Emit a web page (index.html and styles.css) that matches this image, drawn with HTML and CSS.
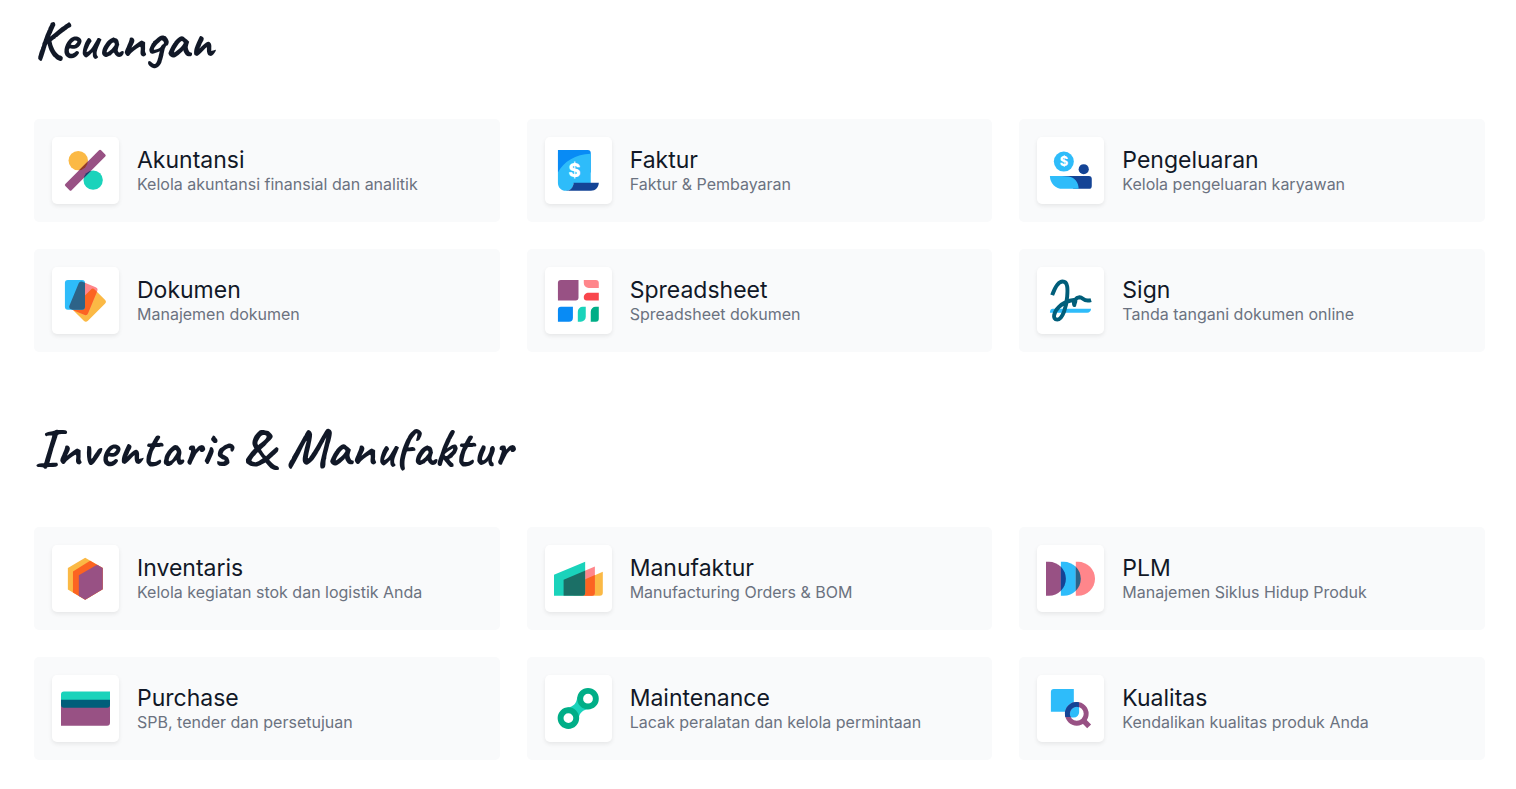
FILE: index.html
```html
<!DOCTYPE html>
<html lang="id">
  <head>
    <meta charset="utf-8">
    <title>Aplikasi</title>
    <link rel="stylesheet" href="styles.css">
  </head>
  <body>
    <main class="apps">

      <section class="category">
        <h2>Keuangan</h2>
        <div class="grid">
          <a class="app" href="#">
            <span class="icon">
              <svg viewBox="0 0 50 50" aria-hidden="true">
                <clipPath id="bar"><rect x="-1" y="20.3" width="51.6" height="9" rx="1.5" transform="rotate(-45 24.8 24.8)"/></clipPath>
                <circle cx="17.6" cy="14.9" r="9.9" fill="#fbb945"/>
                <circle cx="32.8" cy="34.8" r="9.9" fill="#1ad3bb"/>
                <rect x="-1" y="20.3" width="51.6" height="9" rx="1.5" transform="rotate(-45 24.8 24.8)" fill="#985184"/>
                <g clip-path="url(#bar)">
                  <circle cx="17.6" cy="14.9" r="9.9" fill="#953b24"/>
                  <circle cx="32.8" cy="34.8" r="9.9" fill="#17416f"/>
                </g>
              </svg>
            </span>
            <span class="text"><strong>Akuntansi</strong><small>Kelola akuntansi finansial dan analitik</small></span>
          </a>
          <a class="app" href="#">
            <span class="icon">
              <svg viewBox="0 0 50 50" aria-hidden="true">
                <path d="M4 4h30.500a3 3 0 0 1 3 3v20H4z" fill="#088bf5"/>
                <path d="M4 27C10 16 22 8.500 37.500 8v30H20c0 4.500-3.500 7.700-8 7.700s-8-3.500-8-8z" fill="#2ebcfa"/>
                <path d="M20 37.500h25.700c0 4.500-3.500 8.200-8 8.200H12c4.500 0 8-3.700 8-8.200z" fill="#144496"/>
                <text class="dollar" x="20.700" y="31.700" font-size="19">$</text>
              </svg>
            </span>
            <span class="text"><strong>Faktur</strong><small>Faktur &amp; Pembayaran</small></span>
          </a>
          <a class="app" href="#">
            <span class="icon">
              <svg viewBox="0 0 50 50" aria-hidden="true">
                <circle cx="18.200" cy="15.900" r="10.200" fill="#2ebcfa"/>
                <circle cx="38.500" cy="23.700" r="5.200" fill="#144496"/>
                <path d="M16 30.500h27.700a3 3 0 0 1 3 3v7.200a3 3 0 0 1-3 3H28z" fill="#144496"/>
                <path d="M4 30.500h12l7 .6c6 .8 10.300 6 10.300 12.600H17C9.800 43.700 4 38 4 30.500z" fill="#2ebcfa"/>
                <text class="dollar" x="18.200" y="20.600" font-size="13">$</text>
              </svg>
            </span>
            <span class="text"><strong>Pengeluaran</strong><small>Kelola pengeluaran karyawan</small></span>
          </a>
          <a class="app" href="#">
            <span class="icon">
              <svg viewBox="0 0 50 50" aria-hidden="true">
                <clipPath id="page-back"><rect x="18.600" y="14.600" width="20.500" height="30.500" rx="3" transform="rotate(45 28.900 29.900)"/></clipPath>
                <clipPath id="page-front"><rect x="4" y="4" width="20.500" height="30.500" rx="3"/></clipPath>
                <rect x="18.600" y="14.600" width="20.500" height="30.500" rx="3" transform="rotate(45 28.900 29.900)" fill="#fbb945"/>
                <rect x="12.600" y="7.500" width="20.500" height="30.500" rx="3" transform="rotate(22.500 22.900 22.700)" fill="#ff868b"/>
                <g clip-path="url(#page-back)">
                  <rect x="12.600" y="7.500" width="20.500" height="30.500" rx="3" transform="rotate(22.500 22.900 22.700)" fill="#fc6421"/>
                </g>
                <rect x="4" y="4" width="20.500" height="30.500" rx="3" fill="#2ebcfa"/>
                <g clip-path="url(#page-front)">
                  <rect x="12.600" y="7.500" width="20.500" height="30.500" rx="3" transform="rotate(22.500 22.900 22.700)" fill="#2d6388"/>
                </g>
              </svg>
            </span>
            <span class="text"><strong>Dokumen</strong><small>Manajemen dokumen</small></span>
          </a>
          <a class="app" href="#">
            <span class="icon">
              <svg viewBox="0 0 50 50" aria-hidden="true">
                <path d="M7 4h18v18a3 3 0 0 1-3 3H4V7a3 3 0 0 1 3-3z" fill="#985184"/>
                <path d="M30.400 4h12.300a3 3 0 0 1 3 3v5.200H35.400a5 5 0 0 1-5-5z" fill="#ff868b"/>
                <path d="M35.400 17.200h10.300V25H33.400a3 3 0 0 1-3-3c0-2.800 2.200-4.800 5-4.800z" fill="#f9464c"/>
                <path d="M7 31.400h12.300v11.200a4 4 0 0 1-4 4H4V34.400a3 3 0 0 1 3-3z" fill="#088bf5"/>
                <path d="M29.300 31.400h3.100v10.200a5 5 0 0 1-5 5h-3.100V36.400a5 5 0 0 1 5-5z" fill="#1ad3bb"/>
                <path d="M42.500 31.400h3.200v12.200a3 3 0 0 1-3 3h-5.200V36.400a5 5 0 0 1 5-5z" fill="#00ae87"/>
              </svg>
            </span>
            <span class="text"><strong>Spreadsheet</strong><small>Spreadsheet dokumen</small></span>
          </a>
          <a class="app" href="#">
            <span class="icon">
              <svg viewBox="0 0 50 50" aria-hidden="true">
                <path d="M7 33.500h39c0 2.300-1.700 4-4 4H4c0-2.300 1-4 3-4z" fill="#2ebcfa"/>
                <path d="M6.300 19.600C9 12 12.500 5.600 17 5.600c5.500 0 5.200 8 4.600 15.400C20.900 31 17 44.500 11.500 44.500c-5.500 0-3.500-8 1.500-12.800 4.500-4.300 10.500-6.800 15.500-7.200 3 0 .5 3 .4 5.200-1.500-4 1.600-7.700 5.300-8 4-.2 3.800 5.300 11.800 2.800" fill="none" stroke="#005e7a" stroke-width="4" stroke-linejoin="round"/>
              </svg>
            </span>
            <span class="text"><strong>Sign</strong><small>Tanda tangani dokumen online</small></span>
          </a>
        </div>
      </section>

      <section class="category">
        <h2>Inventaris &amp; Manufaktur</h2>
        <div class="grid">
          <a class="app" href="#">
            <span class="icon">
              <svg viewBox="0 0 50 50" aria-hidden="true">
                <path d="M24.700 3.900l17.900 10.400V36L24.700 46.600 7 36.300v-22z" fill="#fbb945"/>
                <path d="M29.700 6.900l12.900 7.400V36L24.700 46.600l-12.500-7.300V17.800z" fill="#fc6421"/>
                <path d="M36.800 10.900l5.800 3.400V36L24.700 46.600l-6.500-3.800V21.800z" fill="#985184"/>
              </svg>
            </span>
            <span class="text"><strong>Inventaris</strong><small>Kelola kegiatan stok dan logistik Anda</small></span>
          </a>
          <a class="app" href="#">
            <span class="icon">
              <svg viewBox="0 0 50 50" aria-hidden="true">
                <clipPath id="hall"><path d="M0 21.300L31.800 7.800v31.800a3 3 0 0 1-3 3H0z"/></clipPath>
                <path d="M20 31l29.800-13v21.600a3 3 0 0 1-3 3H20z" fill="#fbb945"/>
                <path d="M9.800 26.300l31.900-13.500v26.800a3 3 0 0 1-3 3H9.800z" fill="#ff868b"/>
                <path d="M20 31l21.700-9.500v18.100a3 3 0 0 1-3 3H20z" fill="#fc6421"/>
                <path d="M0 21.300L31.800 7.800v31.800a3 3 0 0 1-3 3H0z" fill="#1ad3bb"/>
                <path d="M9.800 26.300l31.900-13.500v29.800H9.800z" fill="#1b6f66" clip-path="url(#hall)"/>
              </svg>
            </span>
            <span class="text"><strong>Manufaktur</strong><small>Manufacturing Orders &amp; BOM</small></span>
          </a>
          <a class="app" href="#">
            <span class="icon">
              <svg viewBox="0 0 50 50" aria-hidden="true">
                <clipPath id="d-one"><path d="M0 8h3a17.300 17.300 0 0 1 0 34.600H0z"/></clipPath>
                <clipPath id="d-two"><path d="M15.200 8h3a17.300 17.300 0 0 1 0 34.600h-3z"/></clipPath>
                <path d="M0 8h3a17.300 17.300 0 0 1 0 34.600H0z" fill="#985184"/>
                <path d="M15.200 8h3a17.300 17.300 0 0 1 0 34.600h-3z" fill="#2ebcfa"/>
                <path d="M30.400 8h2.300a17.300 17.300 0 0 1 0 34.600h-2.300z" fill="#ff868b"/>
                <path d="M15.200 8h6v34.600h-6z" fill="#144496" clip-path="url(#d-one)"/>
                <path d="M30.400 8h6v34.600h-6z" fill="#2d6388" clip-path="url(#d-two)"/>
              </svg>
            </span>
            <span class="text"><strong>PLM</strong><small>Manajemen Siklus Hidup Produk</small></span>
          </a>
          <a class="app" href="#">
            <span class="icon">
              <svg viewBox="0 0 50 50" aria-hidden="true">
                <path d="M0 16h50v23.500a3 3 0 0 1-3 3H0z" fill="#985184"/>
                <path d="M3 7.700h47V17H0v-6.300a3 3 0 0 1 3-3z" fill="#1ad3bb"/>
                <path d="M0 16h50v5.200a3 3 0 0 1-3 3H3a3 3 0 0 1-3-3z" fill="#005e7a"/>
              </svg>
            </span>
            <span class="text"><strong>Purchase</strong><small>SPB, tender dan persetujuan</small></span>
          </a>
          <a class="app" href="#">
            <span class="icon">
              <svg viewBox="0 0 50 50" aria-hidden="true">
                <path d="M23.700 13.500c-.5 6-4 10-10 10.500l-2 12 13.500-.5c.5-6 4.500-9.500 10.500-10l2-11.500z" fill="#1ad3bb"/>
                <circle cx="34.700" cy="15" r="8" fill="#fff" stroke="#00ae87" stroke-width="6"/>
                <circle cx="14.700" cy="34.800" r="8" fill="#fff" stroke="#00ae87" stroke-width="6"/>
              </svg>
            </span>
            <span class="text"><strong>Maintenance</strong><small>Lacak peralatan dan kelola permintaan</small></span>
          </a>
          <a class="app" href="#">
            <span class="icon">
              <svg viewBox="0 0 50 50" aria-hidden="true">
                <clipPath id="lens"><path d="M19 18h14.600v15.600H19z"/></clipPath>
                <path d="M8 5h20.400v23.400H5V8a3 3 0 0 1 3-3z" fill="#2ebcfa"/>
                <circle cx="31.400" cy="30.400" r="9.600" fill="#fff"/>
                <path d="M24 23h9.800v5.800a5.500 5.500 0 0 1-5.500 5.500H24z" fill="#2ebcfa"/>
                <path d="M37.500 36.500l6.500 6.700" stroke="#985184" stroke-width="5.500"/>
                <circle cx="31.400" cy="30.400" r="9.600" fill="none" stroke="#985184" stroke-width="5"/>
                <circle cx="31.400" cy="30.400" r="9.600" fill="none" stroke="#144496" stroke-width="5" clip-path="url(#lens)"/>
              </svg>
            </span>
            <span class="text"><strong>Kualitas</strong><small>Kendalikan kualitas produk Anda</small></span>
          </a>
        </div>
      </section>

    </main>
  </body>
</html>
```
FILE: styles.css
```css
*,
*:before,
*:after {
  box-sizing: border-box;
}

body {
  margin: 0;
  background: #fff;
  color: #111827;
  font-family: Inter, "Liberation Sans", sans-serif;
}

.apps {
  padding: 8px 31px 28px 34px;
}

.category + .category {
  margin-top: 64px;
}

h2 {
  margin: 0 0 46px;
  font-family: Caveat, cursive;
  font-size: 54px;
  font-weight: 700;
  line-height: 65px;
}

.grid {
  display: grid;
  grid-template-columns: repeat(3, 1fr);
  gap: 27px;
}

.app {
  display: flex;
  align-items: center;
  gap: 18px;
  padding: 18px;
  border-radius: 5px;
  background: #f9fafb;
  color: inherit;
  text-decoration: none;
}

.icon {
  flex: none;
  padding: 9px;
  border-radius: 5px;
  background: #fff;
  box-shadow: 0 2px 4px rgba(0, 0, 0, 0.08);
}

.icon svg {
  display: block;
  width: 49px;
  height: 49px;
}

.dollar {
  fill: #fff;
  font-weight: 800;
  text-anchor: middle;
}

.text strong,
.text small {
  display: block;
}

.text strong {
  font-size: 23px;
  font-weight: 400;
  line-height: 27px;
}

.text small {
  color: #6b7280;
  font-size: 16px;
  line-height: 21px;
}
```
